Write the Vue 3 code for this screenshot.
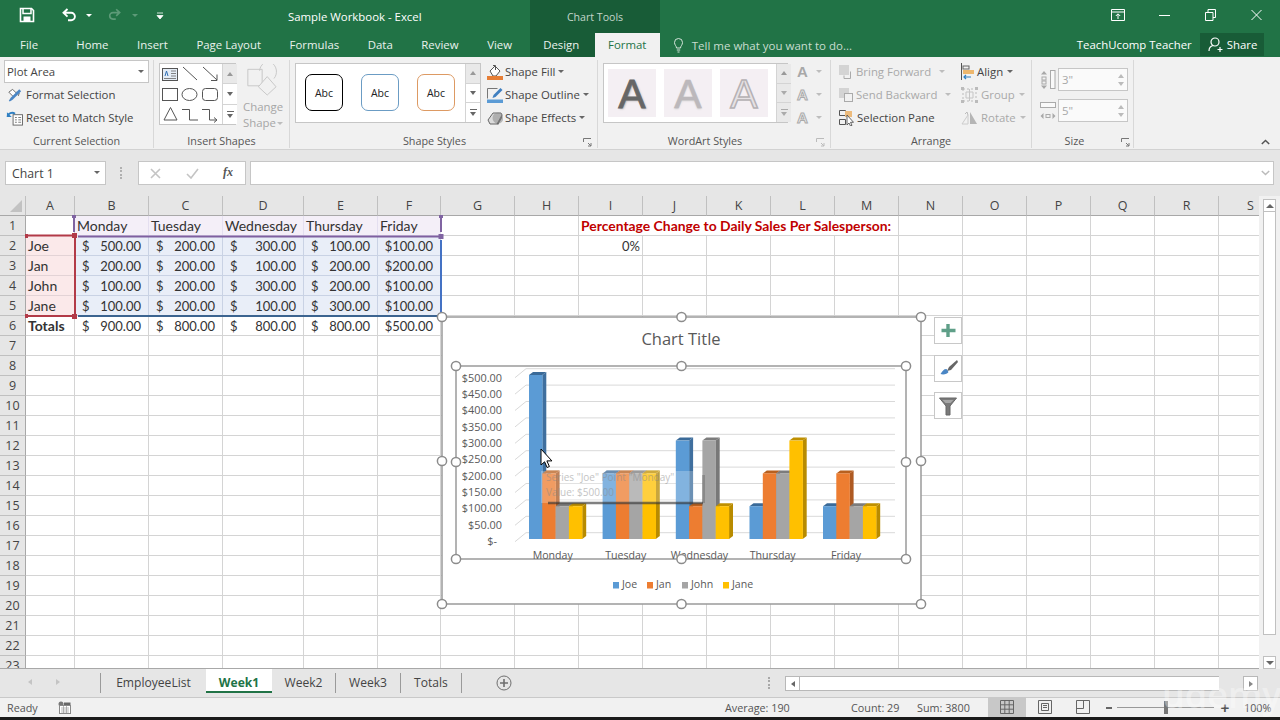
<script setup>
const tabs = ['Home', 'Insert', 'Page Layout', 'Formulas', 'Data', 'Review', 'View']
const colDefs = [['A',49],['B',74],['C',74],['D',81],['E',74],['F',63],['G',74],['H',64],['I',64],['J',64],['K',64],['L',64],['M',64],['N',64],['O',64],['P',64],['Q',64],['R',64],['S',64]]
const letters = colDefs.map(c => c[0])
const table = {
  2: ['Joe', 500, 200, 300, 100, 100],
  3: ['Jan', 200, 200, 100, 200, 200],
  4: ['John', 100, 200, 300, 200, 100],
  5: ['Jane', 100, 200, 100, 300, 100],
  6: ['Totals', 900, 800, 800, 800, 500]
}
const days = ['Monday', 'Tuesday', 'Wednesday', 'Thursday', 'Friday']
const money = v => v.toFixed(2)
function buildCells() {
  const out = []
  for (let r = 1; r <= 23; r++) {
    out.push({ key: 'h' + r, text: String(r), cls: 'rowhead' })
    for (let c = 0; c < letters.length; c++) {
      const key = letters[c] + r
      if (r === 1) {
        if (c >= 1 && c <= 5) { out.push({ key, text: days[c - 1], cls: 'tint-p' }); continue }
        if (letters[c] === 'I') { out.push({ key, text: 'Percentage Change to Daily Sales Per Salesperson:', cls: 'red', span: 5 }); continue }
        if (['J','K','L','M'].includes(letters[c])) continue
      }
      if (r === 2 && letters[c] === 'I') { out.push({ key, text: '0%', cls: 'right pct' }); continue }
      const row = table[r]
      if (row && c === 0) { out.push({ key, text: row[0], cls: r === 6 ? 'bold' : 'tint-r' }); continue }
      if (row && c >= 1 && c <= 4) { out.push({ key, dollar: true, text: money(row[c]), cls: r === 6 ? 'acct' : 'tint-b acct' }); continue }
      if (row && c === 5) { out.push({ key, text: '$' + money(row[c]), cls: 'right num' + (r === 6 ? '' : ' tint-b') }); continue }
      out.push({ key, text: '', cls: '' })
    }
  }
  return out
}
const cells = buildCells()

const series = [
  { name: 'Joe', front: '#5b9bd5', side: '#3f6f9e', top: '#3a6a98', vals: [500, 200, 300, 100, 100] },
  { name: 'Jan', front: '#ed7d31', side: '#ae5a22', top: '#b8601f', vals: [200, 200, 100, 200, 200] },
  { name: 'John', front: '#a5a5a5', side: '#787878', top: '#7c7c7c', vals: [100, 200, 300, 200, 100] },
  { name: 'Jane', front: '#ffc000', side: '#b88b00', top: '#bf9000', vals: [100, 200, 100, 300, 100] }
]
const groupX = [529, 602.6, 675.8, 749.5, 823]
const bars = []
groupX.forEach((gx, g) => {
  series.forEach((s, i) => {
    const x = gx + i * 13.3, w = 13.3, h = s.vals[g] * 0.328, y = 539 - h
    bars.push({
      key: g + '-' + i, x, y, w, h, c: s,
      sidePts: `${x + w},${y} ${x + w + 4},${y - 3} ${x + w + 4},536 ${x + w},539`,
      topPts: `${x},${y} ${x + 4},${y - 3} ${x + w + 4},${y - 3} ${x + w},${y}`
    })
  })
})
const gridY = Array.from({ length: 11 }, (_, i) => 368.7 + i * 16.4)
const axis = ['$500.00','$450.00','$400.00','$350.00','$300.00','$250.00','$200.00','$150.00','$100.00','$50.00','$-']
const catX = [552.7, 625.8, 699.5, 772.7, 846]
const legend = [['Joe', 613, '#5b9bd5'], ['Jan', 647, '#ed7d31'], ['John', 682, '#a5a5a5'], ['Jane', 723, '#ffc000']]
const handles = [
  [442,317],[681.5,317],[921,317],[442,461],[921,461],[442,604],[681.5,604],[921,604],
  [456,366],[681.5,366],[906,366],[456,462],[906,462],[456,559],[681.5,559],[906,559]
]
const sheets = [['EmployeeList', 106], ['Week1', 66, true], ['Week2', 64], ['Week3', 65], ['Totals', 61]]
</script>

<template>
  <div class="app">
    <!-- title bar -->
    <header class="titlebar">
      <div class="qat">
        <svg class="q-save" width="16" height="16" viewBox="0 0 16 16"><path d="M1.5 1.5h11l2 2v11h-13z" fill="none" stroke="#fff" stroke-width="1.6"/><path d="M4 2v4.5h8V2" fill="none" stroke="#fff" stroke-width="1.5"/><rect x="4.5" y="9.5" width="7" height="5" fill="#fff"/></svg>
        <svg class="q-undo" width="16" height="14" viewBox="0 0 16 14"><path d="M5.5 1 1.5 4.8l4 3.8M2 4.8h7.2a3.7 3.7 0 0 1 0 7.4H6" fill="none" stroke="#fff" stroke-width="1.9"/></svg>
        <i class="tri white q-d1"></i>
        <svg class="q-redo" width="14" height="13" viewBox="0 0 16 14"><path d="M10.5 1l4 3.8-4 3.8M14 4.8H6.8a3.7 3.7 0 0 0 0 7.4H10" fill="none" stroke="#5d9a78" stroke-width="1.9"/></svg>
        <i class="tri dim q-d2"></i>
        <svg class="q-cust" width="8" height="8" viewBox="0 0 8 8"><path d="M1 1h6M1 3.5h6l-3 3.5z" fill="#fff" stroke="#fff" stroke-width=".8"/></svg>
      </div>
      <div class="doc-title">Sample Workbook - Excel</div>
      <div class="chart-tools">Chart Tools</div>
      <div class="winbtns">
        <svg class="w-disp" width="14" height="12" viewBox="0 0 14 12"><path d="M.5.5h13v11H.5zM.5 3h13M7 10V5M4.8 7 7 4.8 9.2 7" fill="none" stroke="#fff"/></svg>
        <svg width="11" height="12" viewBox="0 0 11 12"><path d="M0 6.5h11" stroke="#fff"/></svg>
        <svg width="11" height="12" viewBox="0 0 11 12"><path d="M.5 3.5h7.5v8H.5zM3 3.5v-3h7.5v8H8" fill="none" stroke="#fff"/></svg>
        <svg width="11" height="12" viewBox="0 0 11 12"><path d="M.5 1l10 10M10.5 1l-10 10" stroke="#fff"/></svg>
      </div>
    </header>

    <!-- tabs -->
    <nav class="tabrow">
      <div class="tab file">File</div>
      <div v-for="t in tabs" :key="t" class="tab">{{ t }}</div>
      <div class="tab ctx">Design</div>
      <div class="tab active">Format</div>
      <div class="tell">
        <svg width="9" height="15" viewBox="0 0 9 15"><path d="M2.5 10c0-2-2-3-2-5.5a4 4 0 0 1 8 0C8.500 7 6.500 8 6.500 10zM2.800 12h3.400M3.500 14h2" fill="none" stroke="#d5e5db"/></svg>
        <span>Tell me what you want to do...</span>
      </div>
      <div class="user">TeachUcomp Teacher</div>
      <div class="share">
        <svg width="15" height="15" viewBox="0 0 15 15"><circle cx="7" cy="5" r="4" fill="none" stroke="#fff" stroke-width="1.2"/><path d="M1 14c0-3 2-5 4-5.500M9.500 12.500h5M12 10v5" fill="none" stroke="#fff" stroke-width="1.2"/></svg>
        <span>Share</span>
      </div>
    </nav>

    <!-- ribbon -->
    <section class="ribbon">
      <div class="group g1">
        <div class="gbody col">
          <div class="select">Plot Area<i class="tri gray"></i></div>
          <div class="ritem">
            <svg width="17" height="16" viewBox="0 0 18 16"><path d="M3 5l4-3 5 5-4 3z" fill="#fff" stroke="#666"/><path d="M11 5l3 1-1 3" fill="none" stroke="#666"/><path d="M16 4 7 13l-3 2-1-1 2-3 9-9z" fill="#4a86c5"/></svg>
            <span>Format Selection</span>
          </div>
          <div class="ritem">
            <svg width="17" height="16" viewBox="0 0 18 16"><rect x="7.5" y="4.5" width="10" height="11" fill="#fff" stroke="#666"/><path d="M9.5 7.5h2M9.5 10h2M9.5 12.5h2M13 7.5h3M13 10h3M13 12.5h3" stroke="#777"/><path d="M1.5 6.5a5 5 0 0 1 8-3" fill="none" stroke="#2f7fc2" stroke-width="2"/><path d="M1 2v5h5z" fill="#2f7fc2"/></svg>
            <span>Reset to Match Style</span>
          </div>
        </div>
        <div class="glabel">Current Selection</div>
      </div>

      <div class="group g2">
        <div class="gbody row">
          <div class="gallery shapes">
            <svg width="62" height="60" viewBox="160 64 62 60">
              <rect x="162.5" y="68.5" width="15" height="12" fill="#e4ecf5" stroke="#555"/>
              <path d="M171 71h5M171 73.5h5M171 76h5M164 78.5h12" stroke="#666" stroke-width=".8"/>
              <path d="M165 76l1.500-5 1.500 5" fill="none" stroke="#2f6fb5"/>
              <path d="M183 67l14 13M203 67l14 13M217 74.5v6h-6" fill="none" stroke="#555"/>
              <rect x="162.5" y="88.5" width="15" height="12" fill="none" stroke="#555"/>
              <ellipse cx="189.5" cy="94.5" rx="7.5" ry="6" fill="none" stroke="#555"/>
              <rect x="202.5" y="88.5" width="15" height="12" rx="3" fill="none" stroke="#555"/>
              <path d="M170.5 107.5l6.500 12.500h-13zM182 109.5h7.500V120h8.500M202 109.5h7.500V120h7M214 117.500l3 2.500-3 2.500" fill="none" stroke="#555"/>
            </svg>
            <div class="gscroll"><div class="sb dis"><i class="utri"></i></div><div class="sb"><i class="dtri"></i></div><div class="sb"><i class="more"></i></div></div>
          </div>
          <div class="change">
            <svg width="32" height="32" viewBox="0 0 38 33" preserveAspectRatio="none"><path d="M1 5.500h17v17H1z" fill="none" stroke="#c4c4c4"/><path d="M15 7a10 10 0 1 1 17 8" fill="none" stroke="#c4c4c4"/><path d="M24 13l-10.500 10.500L24 32l10.500-8.500z" fill="#f1f1f1" stroke="#c4c4c4"/></svg>
            <div>Change</div>
            <div>Shape<i class="tri pale"></i></div>
          </div>
        </div>
        <div class="glabel">Insert Shapes</div>
      </div>

      <div class="group g3">
        <div class="gbody row">
          <div class="gallery styles">
            <div class="abcs">
              <div class="abc k">Abc</div>
              <div class="abc b">Abc</div>
              <div class="abc o">Abc</div>
            </div>
            <div class="gscroll"><div class="sb dis"><i class="utri"></i></div><div class="sb"><i class="dtri"></i></div><div class="sb"><i class="more"></i></div></div>
          </div>
          <div class="col cmds">
            <div class="ritem">
              <svg width="16" height="16" viewBox="0 0 16 16"><path d="M3 7l5-5 5 5-4 5H6z" fill="#fff" stroke="#555"/><path d="M6 1.5h2.500V6" fill="none" stroke="#555"/><rect x="0" y="12" width="16" height="4" fill="#e67e36"/></svg>
              <span>Shape Fill</span><i class="tri gray"></i>
            </div>
            <div class="ritem">
              <svg width="16" height="16" viewBox="0 0 16 16"><path d="M.5 11.500v-10h10" fill="none" stroke="#777"/><path d="M13.500 1l2 2-7 7-3 1 1-3z" fill="#3f7fc0"/><rect x="0" y="12.500" width="16" height="3.500" fill="#5b9bd5"/></svg>
              <span>Shape Outline</span><i class="tri gray"></i>
            </div>
            <div class="ritem">
              <svg width="16" height="16" viewBox="0 0 16 16"><path d="M1 10l5-7h8l1 2-5 9H3z" fill="#dcdcdc" stroke="#666"/><path d="M10 14l5-9 0 3-4 7z" fill="#555"/><circle cx="11" cy="8" r="5.500" fill="#8b8b8b" opacity=".55"/></svg>
              <span>Shape Effects</span><i class="tri gray"></i>
            </div>
          </div>
        </div>
        <div class="glabel shift">Shape Styles<svg class="launch" width="9" height="9" viewBox="0 0 9 9"><path d="M.5 4V.5H8M5 5l3 3M8 5v3H5" fill="none" stroke="#777"/></svg></div>
      </div>

      <div class="group g4">
        <div class="gbody row">
          <div class="gallery word">
            <div class="wa"><span class="a1">A</span></div>
            <div class="wa"><span class="a2">A</span></div>
            <div class="wa"><span class="a3">A</span></div>
            <div class="gscroll"><div class="sb dis"><i class="utri"></i></div><div class="sb dis"><i class="dtri"></i></div><div class="sb dis"><i class="more"></i></div></div>
          </div>
          <div class="col acol">
            <div class="aitem"><b class="af">A</b><i class="tri pale"></i></div>
            <div class="aitem"><b class="ao">A</b><i class="tri pale"></i></div>
            <div class="aitem"><b class="ao">A</b><i class="tri pale"></i></div>
          </div>
        </div>
        <div class="glabel shift">WordArt Styles<svg class="launch" width="9" height="9" viewBox="0 0 9 9"><path d="M.5 4V.5H8M5 5l3 3M8 5v3H5" fill="none" stroke="#bbb"/></svg></div>
      </div>

      <div class="group g5">
        <div class="gbody row">
          <div class="col c-a">
            <div class="ritem off">
              <svg width="14" height="16" viewBox="0 0 14 16"><rect x="0" y="1" width="10" height="10" fill="#d4d4d4"/><path d="M11.5 7.5v7H5v-3" fill="none" stroke="#aaa"/></svg>
              <span>Bring Forward</span><i class="tri pale far"></i>
            </div>
            <div class="ritem off">
              <svg width="14" height="16" viewBox="0 0 14 16"><rect x="0" y="1" width="10" height="10" fill="#d4d4d4"/><rect x="5.5" y="6.5" width="8" height="8" fill="#f1f1f1" stroke="#aaa"/></svg>
              <span>Send Backward</span><i class="tri pale far"></i>
            </div>
            <div class="ritem">
              <svg width="15" height="17" viewBox="0 0 15 17"><path d="M.5 1.5h6v5h-6zM.5 10.5h6v5h-6z" fill="none" stroke="#555"/><rect x="6" y="2" width="7" height="6" fill="#edbb7c"/><path d="M8 6v10l2-2 1.500 3 1.500-.7-1.500-3h3z" fill="#fff" stroke="#555" stroke-width=".9"/></svg>
              <span>Selection Pane</span>
            </div>
          </div>
          <div class="col c-b">
            <div class="ritem">
              <svg width="13" height="17" viewBox="0 0 13 17"><path d="M.5 0v17" stroke="#555"/><rect x="2" y="3" width="6" height="3" fill="none" stroke="#666"/><rect x="2" y="7" width="11" height="4" fill="#edb76e"/><path d="M10 14H3M5 12l-2 2 2 2" fill="none" stroke="#2f7fc2" stroke-width="1.2"/></svg>
              <span>Align</span><i class="tri gray"></i>
            </div>
            <div class="ritem off">
              <svg width="17" height="16" viewBox="0 0 17 16"><path d="M2 2h13v12H2z" fill="none" stroke="#bbb" stroke-dasharray="2 2"/><path d="M5 5h7v6H5zM8.5 2v12" fill="none" stroke="#c5c5c5"/><rect x="0" y="0" width="3" height="3" fill="#bbb"/><rect x="14" y="0" width="3" height="3" fill="#bbb"/><rect x="0" y="13" width="3" height="3" fill="#bbb"/><rect x="14" y="13" width="3" height="3" fill="#bbb"/></svg>
              <span>Group</span><i class="tri pale"></i>
            </div>
            <div class="ritem off">
              <svg width="17" height="14" viewBox="0 0 17 14"><path d="M1 13l6-9v9z" fill="none" stroke="#ccc"/><path d="M9 1v12h7z" fill="#b5b5b5"/><path d="M4 3l2-2 1 3" fill="none" stroke="#bbb"/></svg>
              <span>Rotate</span><i class="tri pale"></i>
            </div>
          </div>
        </div>
        <div class="glabel">Arrange</div>
      </div>

      <div class="group g6">
        <div class="gbody col sizes">
          <div class="srow">
            <svg width="16" height="20" viewBox="0 0 16 20"><rect x="10.5" y=".5" width="4.5" height="18" fill="#f9f9f9" stroke="#aaa"/><path d="M4 1l-3 3.500h6zM4 19l-3-3.500h6z" fill="#a8a8a8"/><rect x="2" y="7" width="4" height="3" fill="none" stroke="#aaa"/><rect x="2" y="11" width="4" height="3" fill="none" stroke="#aaa"/></svg>
            <div class="spin"><span>3"</span><em><i class="utri"></i><i class="dtri"></i></em></div>
          </div>
          <div class="srow">
            <svg width="16" height="20" viewBox="0 0 16 20"><rect x=".5" y="1.5" width="15" height="5" fill="#f9f9f9" stroke="#aaa"/><path d="M.5 15l3-3v6zM15.500 15l-3-3v6z" fill="#a8a8a8"/><rect x="6" y="13.5" width="4" height="3" fill="none" stroke="#aaa"/></svg>
            <div class="spin"><span>5"</span><em><i class="utri"></i><i class="dtri"></i></em></div>
          </div>
        </div>
        <div class="glabel">Size<svg class="launch" width="9" height="9" viewBox="0 0 9 9"><path d="M.5 4V.5H8M5 5l3 3M8 5v3H5" fill="none" stroke="#777"/></svg></div>
      </div>
      <svg class="collapse" width="9" height="6" viewBox="0 0 9 6"><path d="M.8 5 4.500 1.500 8.200 5" fill="none" stroke="#555" stroke-width="1.5"/></svg>
    </section>

    <!-- formula bar -->
    <section class="fbar">
      <div class="namebox">Chart 1<i class="tri gray"></i></div>
      <div class="fdots"><i></i></div>
      <div class="fbtns">
        <svg class="fx-x" width="11" height="11" viewBox="0 0 11 11"><path d="M1 1l9 9M10 1l-9 9" stroke="#c4c4c4" stroke-width="1.6"/></svg>
        <svg class="fx-c" width="13" height="11" viewBox="0 0 13 11"><path d="M1 6l4 4 7-9" fill="none" stroke="#c4c4c4" stroke-width="1.6"/></svg>
        <span class="fx-f">fx</span>
      </div>
      <div class="finput"><svg width="9" height="6" viewBox="0 0 9 6"><path d="M.8 1 4.500 4.500 8.200 1" fill="none" stroke="#bbb" stroke-width="1.5"/></svg></div>
    </section>

    <!-- sheet -->
    <section class="sheet">
      <div class="gridwrap">
        <div class="grid">
          <div class="corner"><i></i></div>
          <div v-for="c in colDefs" :key="c[0]" class="colhead">{{ c[0] }}</div>
          <div
            v-for="c in cells"
            :key="c.key"
            class="cell"
            :class="c.cls"
            :style="c.span ? { gridColumn: 'span ' + c.span } : null"
          >
            <template v-if="c.dollar"><span>$</span><span>{{ c.text }}</span></template>
            <template v-else>{{ c.text }}</template>
          </div>
        </div>

        <svg class="overlay" width="1259" height="473" viewBox="0 196 1259 473">
          <!-- reference ranges -->
          <path d="M74 218v14" stroke="#8064a2" stroke-width="2"/>
          <path d="M441 218v14" stroke="#8064a2" stroke-width="2"/>
          <path d="M78 236.5h363" stroke="#7f60a0" stroke-width="2"/>
          <rect x="72" y="215" width="4" height="3" fill="#8064a2"/>
          <rect x="439" y="215" width="4" height="3" fill="#8064a2"/>
          <rect x="438.5" y="234" width="5" height="5" fill="#8064a2"/>
          <path d="M27 235.5h48M27 316h48M75 236v80" stroke="#b23a48" stroke-width="2" fill="none"/>
          <rect x="72" y="233" width="5" height="5" fill="#b23a48"/>
          <rect x="72" y="314" width="5" height="5" fill="#b23a48"/>
          <rect x="25" y="234" width="3" height="4" fill="#b23a48"/>
          <rect x="25" y="314" width="3" height="4" fill="#b23a48"/>
          <path d="M441 240v76" stroke="#4472c4" stroke-width="2"/>
          <path d="M78 316h363" stroke="#3c6490" stroke-width="2"/>

          <!-- chart -->
          <rect x="442" y="317" width="479" height="287" fill="#fff" stroke="#9a9a9a" stroke-width="1.5"/>
          <text x="681" y="344.5" class="c-title" text-anchor="middle">Chart Title</text>
          <rect x="456" y="366" width="450" height="193" fill="#fff" stroke="#9a9a9a" stroke-width="1.5"/>
          <g stroke="#d9d9d9" stroke-width="1">
            <line v-for="y in gridY" :key="y" x1="526" :y1="y" x2="895" :y2="y"/>
            <line v-for="y in gridY" :key="'d' + y" x1="515" :y1="y + 9" x2="526" :y2="y"/>
          </g>
          <text v-for="(t, i) in axis" :key="t" :x="t === '$-' ? 497 : 502" :y="381.5 + i * 16.35" class="c-axis" text-anchor="end">{{ t }}</text>
          <g v-for="b in bars" :key="b.key">
            <polygon :points="b.sidePts" :fill="b.c.side"/>
            <polygon :points="b.topPts" :fill="b.c.top"/>
            <rect :x="b.x" :y="b.y" :width="b.w + .2" :height="b.h" :fill="b.c.front"/>
          </g>
          <text v-for="(d, i) in days" :key="d" :x="catX[i]" y="559" class="c-cat" text-anchor="middle">{{ d }}</text>
          <g v-for="l in legend" :key="l[0]">
            <rect :x="l[1]" y="582" width="6" height="6.5" :fill="l[2]"/>
            <text :x="l[1] + 9" y="588" class="c-cat">{{ l[0] }}</text>
          </g>
          <!-- ghosted tooltip -->
          <rect x="541" y="471" width="161" height="32" fill="#fff" opacity=".24"/>
          <path d="M702 475h3v28h-3z" fill="#555" opacity=".35"/>
          <path d="M548 503h155" stroke="#333" stroke-width="2.4" opacity=".62"/>
          <text x="546" y="481" class="c-ghost">Series "Joe" Point "Monday"</text>
          <text x="546" y="495.5" class="c-ghost">Value: $500.00</text>
          <circle v-for="h in handles" :key="h.join()" :cx="h[0]" :cy="h[1]" r="4.6" fill="#fff" stroke="#8c8c8c" stroke-width="1.5"/>
          <path d="M541 449v16l3.600-3.200 2.500 5.700 2.300-1-2.500-5.600h5z" fill="#fff" stroke="#000" stroke-width="1"/>

          <!-- chart side buttons -->
          <g fill="#fff" stroke="#c8c8c8">
            <rect x="934.5" y="317.5" width="27" height="26"/>
            <rect x="934.5" y="355.5" width="27" height="26"/>
            <rect x="934.5" y="392.5" width="27" height="26"/>
          </g>
          <path d="M948 324v13M941.5 330.5h14" stroke="#5f9f88" stroke-width="3.4"/>
          <path d="M957 360l-8 7-2 4 4-1 7-8z" fill="#666"/>
          <path d="M946.5 369c-3 0-4 2-6 5 3 1 7 0 8-2z" fill="#4a86c5"/>
          <path d="M939.5 398h17l-6.500 8v9h-4v-9z" fill="#7a7a7a" stroke="#666"/>
          <path d="M942.5 400h11l-3 3h-5z" fill="#a8a8a8"/>
        </svg>
      </div>

      <aside class="vscroll">
        <div class="vbtn"><i class="utri dark"></i></div>
        <div class="vthumb"></div>
        <div class="vtrack"></div>
        <div class="vbtn"><i class="dtri dark"></i></div>
      </aside>
    </section>

    <!-- sheet tabs -->
    <section class="sheetbar">
      <div class="navs"><i class="ltri"></i><i class="rtri"></i></div>
      <div class="stabs">
        <div v-for="s in sheets" :key="s[0]" class="stab" :class="{ on: s[2] }" :style="{ width: s[1] + 'px' }">{{ s[0] }}</div>
      </div>
      <svg class="plus" width="16" height="16" viewBox="0 0 16 16"><circle cx="8" cy="8" r="7" fill="none" stroke="#6f6f6f"/><path d="M8 4v8M4 8h8" stroke="#6f6f6f" stroke-width="1.6"/></svg>
      <div class="vdots"></div>
      <div class="hscroll">
        <div class="hbtn"><i class="ltri dark"></i></div>
        <div class="hthumb"></div>
        <div class="htrack"></div>
        <div class="hbtn"><i class="rtri dark"></i></div>
      </div>
    </section>

    <!-- status -->
    <footer class="status">
      <span class="ready">Ready</span>
      <svg class="macro" width="13" height="13" viewBox="0 0 13 13"><circle cx="3" cy="3" r="2.5" fill="#777"/><rect x="1.5" y="4.5" width="11" height="8" fill="#fff" stroke="#888"/><path d="M3 7h8M3 9h8M3 11h8M5.5 5v7M8.5 5v7" stroke="#999" stroke-width=".7"/><path d="M6 1.500h6.500V4H6z" fill="#666"/></svg>
      <span class="s-avg">Average: 190</span>
      <span class="s-count">Count: 29</span>
      <span class="s-sum">Sum: 3800</span>
      <div class="views">
        <div class="view on"><svg width="14" height="14" viewBox="0 0 14 14"><path d="M.5.5h13v13H.5zM.5 4.800h13M.5 9.200h13M4.800.5v13M9.200.5v13" fill="none" stroke="#666"/></svg></div>
        <div class="view"><svg width="14" height="14" viewBox="0 0 14 14"><path d="M.5.5h13v13H.5zM3.500 3.500h7v7h-7zM5 5.500h4M5 7.500h4" fill="none" stroke="#666"/></svg></div>
        <div class="view"><svg width="14" height="14" viewBox="0 0 14 14"><path d="M.5.5h13v13H.5zM.5 8.500h7V.5" fill="none" stroke="#666"/></svg></div>
      </div>
      <div class="zoomer">
        <i class="minus"></i>
        <div class="zline"><b></b></div>
        <span class="zplus">+</span>
      </div>
      <span class="zpct">100%</span>
    </footer>
    <div class="blackbar"></div>
    <div class="watermark">udemy</div>
  </div>
</template>

<style>
html, body { margin: 0; background: #fff; }
</style>

<style scoped>
.app {
  position: relative; width: 1280px; height: 720px; overflow: hidden;
  display: flex; flex-direction: column;
  font: 11.4px "Open Sans", "Noto Sans", sans-serif; color: #444;
  background: #f1f1f1;
}
i { display: inline-block; font-style: normal; }
.tri { width: 0; height: 0; border: 3px solid transparent; border-top: 3.5px solid #666; border-bottom: 0; margin-left: 1px; vertical-align: middle; }
.tri.white { border-top-color: #fff; }
.tri.dim { border-top-color: #5d9a78; }
.tri.gray { border-top-color: #666; }
.tri.pale { border-top-color: #bdbdbd; }
.tri.far { margin-left: 5px; }
.utri { width: 0; height: 0; border: 3px solid transparent; border-bottom: 4px solid #999; border-top: 0; }
.dtri { width: 0; height: 0; border: 3px solid transparent; border-top: 4px solid #666; border-bottom: 0; }
.utri.dark, .dtri.dark { border-left-width: 4px; border-right-width: 4px; }
.utri.dark { border-bottom-color: #666; }
.ltri { width: 0; height: 0; border: 3.5px solid transparent; border-right: 4px solid #c4c4c4; border-left: 0; }
.rtri { width: 0; height: 0; border: 3.5px solid transparent; border-left: 4px solid #c4c4c4; border-right: 0; }
.ltri.dark { border-right-color: #666; }
.rtri.dark { border-left-color: #888; }
.more { width: 7px; height: 6px; border-top: 1px solid #666; position: relative; }
.more::after { content: ""; position: absolute; left: 0; top: 2px; width: 0; height: 0; border: 3.5px solid transparent; border-top: 4px solid #666; border-bottom: 0; }

/* title bar */
.titlebar { height: 33px; flex: none; display: flex; background: #217346; color: #fff; position: relative; }
.qat { width: 288px; flex: none; position: relative; }
.qat > * { position: absolute; }
.q-save { left: 19px; top: 7px; }
.q-undo { left: 62px; top: 8px; }
.q-d1 { left: 85px; top: 14px; }
.q-redo { left: 107px; top: 8px; }
.q-d2 { left: 131px; top: 14px; }
.q-cust { left: 156px; top: 12px; }
.doc-title { width: 242px; flex: none; line-height: 33px; font-size: 11.4px; }
.chart-tools { width: 130px; flex: none; background: #185c37; color: #c3d6ca; text-align: center; line-height: 34px; font-size: 10.6px; }
.winbtns { flex: 1; display: flex; align-items: center; justify-content: flex-end; gap: 35px; padding: 0 18px 3px 0; }
.w-disp { position: relative; left: 1px; }

/* tabs */
.tabrow { height: 24px; flex: none; display: flex; background: #217346; color: #fff; align-items: stretch; }
.tab { padding: 0 14.3px; line-height: 23px; font-size: 11.4px; white-space: nowrap; color: #eaf2ed; }
.tab.file { width: 62px; box-sizing: border-box; padding: 0 0 0 20px; }
.tab.ctx { background: #185c37; width: 65px; box-sizing: border-box; margin-left: 3.4px; padding: 0 2px 0 0; text-align: center; }
.tab.active { background: #f1f1f1; color: #217346; width: 65px; box-sizing: border-box; padding: 0; text-align: center; }
.tell { display: flex; align-items: center; gap: 9px; margin-left: 14px; color: #c8ddcf; width: 403px; flex: none; font-size: 11.5px; }
.user { width: 123px; flex: none; line-height: 23px; color: #fff; white-space: nowrap; }
.share { width: 64px; height: 23px; background: #185c37; display: flex; align-items: center; gap: 4px; padding-left: 8px; box-sizing: border-box; color: #fff; }

/* ribbon */
.ribbon { height: 93px; flex: none; display: flex; background: #f1f1f1; border-bottom: 1px solid #d2d2d2; box-sizing: border-box; position: relative; }
.group { height: 88px; margin-top: 3px; display: flex; flex-direction: column; border-right: 1px solid #d8d8d8; flex: none; box-sizing: border-box; position: relative; }
.gbody { height: 70px; flex: none; box-sizing: border-box; }
.glabel { text-align: center; line-height: 16px; margin-top: 3px; color: #555; font-size: 10.8px; }
.glabel.shift { padding-right: 18px; }
.col { display: flex; flex-direction: column; }
.row { display: flex; }
.launch { position: absolute; right: 5px; bottom: 1px; }
.g1 { width: 154px; padding-left: 4px; }
.g1 .glabel { padding-right: 4px; }
.g2 { width: 136px; }
.g3 { width: 308px; }
.g4 { width: 233px; }
.g5 { width: 201px; }
.g6 { width: 102px; }
.select { width: 145px; height: 23px; box-sizing: border-box; border: 1px solid #c6c6c6; background: #fff; line-height: 21px; padding-left: 2px; color: #444; position: relative; }
.select .tri { position: absolute; right: 4px; top: 9px; }
.ritem { height: 23px; display: flex; align-items: center; gap: 3px; white-space: nowrap; color: #444; flex: none; }
.g1 .ritem { padding-left: 2px; gap: 3px; }
.ritem.off { color: #a9a9a9; }
.gallery { background: #fff; border: 1px solid #c6c6c6; box-sizing: border-box; display: flex; margin-top: 3px; }
.gscroll { display: flex; flex-direction: column; width: 15px; flex: none; margin-left: auto; border-left: 1px solid #d4d4d4; box-sizing: border-box; height: 100%; }
.sb { flex: 1; display: flex; align-items: center; justify-content: center; background: #fff; border-bottom: 1px solid #d4d4d4; }
.sb:last-child { border-bottom: 0; }
.sb.dis { background: #e9e9e9; }
.shapes { width: 77px; height: 62px; margin-left: 5px; }
.shapes svg { flex: none; }
.change { width: 50px; margin-left: 2px; text-align: center; color: #a6a6a6; line-height: 16px; padding-top: 4px; }
.change svg { display: block; margin: 0 0 3px 9px; }
.styles { width: 186px; height: 60px; margin-left: 5px; }
.abcs { display: flex; gap: 18px; padding: 10px 0 0 9px; }
.abc { width: 38px; height: 37px; box-sizing: border-box; border-radius: 7px; border: 1px solid; display: flex; align-items: center; justify-content: center; font-size: 10.5px; color: #222; background: #fff; }
.abc.k { border-color: #000; }
.abc.b { border-color: #6b9cc4; }
.abc.o { border-color: #dd9a63; }
.cmds { margin-left: 6px; }
.cmds .ritem { gap: 2px; }
.word { width: 185px; height: 60px; margin-left: 5px; padding: 5px 0 5px 4px; gap: 8px; }
.word .gscroll { margin: -5px 0 -5px auto; height: 58px; }
.word .dtri { border-top-color: #aaa; }
.word .more { border-top-color: #aaa; }
.word .more::after { border-top-color: #aaa; }
.wa { width: 48px; height: 48px; box-sizing: border-box; padding-top: 3px; background: #f4eff3; display: flex; align-items: center; justify-content: center; font: 400 41px/45px "Liberation Sans", sans-serif; flex: none; }
.a1 { color: #666; -webkit-text-stroke: .8px #666; text-shadow: 1px 1px 2px #aaa; }
.a2 { color: #bcb8bb; -webkit-text-stroke: .6px #bcb8bb; text-shadow: 0 1px 2px #ccc; }
.a3 { color: #e6e2e5; -webkit-text-stroke: 1.5px #b5b1b4; }
.acol { margin-left: 9px; }
.aitem { height: 23px; display: flex; align-items: center; gap: 3px; }
.af, .ao { font: 700 15px "Liberation Sans", sans-serif; width: 12px; }
.af { color: #a8a8a8; }
.ao { color: #f1f1f1; -webkit-text-stroke: 1px #ababab; }
.aitem .tri { margin-left: 4px; }
.c-a { margin-left: 8px; width: 122px; }
.c-b { width: 70px; }
.sizes { padding: 8px 0 0 8px; gap: 8px; }
.srow { height: 23px; display: flex; align-items: center; gap: 2px; flex: none; }
.spin { width: 70px; height: 23px; box-sizing: border-box; border: 1px solid #c6c6c6; background: #fafafa; display: flex; align-items: center; justify-content: space-between; padding: 0 3px; color: #a8a8a8; }
.spin em { display: flex; flex-direction: column; gap: 4px; }
.spin .utri { border-bottom-color: #bbb; }
.spin .dtri { border-top-color: #bbb; }
.g6 .launch { right: 3px; }
.g6 .glabel { padding-right: 16px; }
.collapse { position: absolute; left: 1261px; top: 82px; }

/* formula bar */
.fbar { height: 46px; flex: none; background: #e6e6e6; box-sizing: border-box; padding-top: 11px; display: flex; }
.namebox { width: 101px; height: 24px; box-sizing: border-box; margin-left: 5px; border: 1px solid #c6c6c6; background: #fff; line-height: 23px; padding-left: 6px; font-size: 12.3px; color: #444; position: relative; }
.namebox .tri { position: absolute; right: 5px; top: 9px; }
.fdots { width: 32px; flex: none; position: relative; }
.fdots i { position: absolute; left: 14px; top: 6px; height: 12px; border-left: 2px dotted #b0b0b0; }
.fbtns { width: 108px; height: 24px; box-sizing: border-box; border: 1px solid #c6c6c6; background: #fff; position: relative; color: #c0c0c0; }
.fbtns svg { position: absolute; top: 6px; }
.fx-x { left: 11px; }
.fx-c { left: 47px; }
.fx-f { position: absolute; top: 3px; left: 84px; font: italic 700 12px "Liberation Serif", serif; color: #555; }
.finput { width: 1024px; height: 24px; margin-left: 4px; box-sizing: border-box; border: 1px solid #c6c6c6; background: #fff; text-align: right; padding-right: 3px; line-height: 20px; }

/* sheet */
.sheet { height: 473px; flex: none; display: flex; background: #fff; }
.gridwrap { width: 1259px; height: 473px; position: relative; overflow: hidden; flex: none; border-bottom: 1px solid #a8a8a8; box-sizing: border-box; }
.grid {
  display: grid;
  grid-template-columns: 26px 49px 74px 74px 81px 74px 63px 74px repeat(12, 64px);
  grid-auto-rows: 20px;
  font: 14px Lato, "Open Sans", sans-serif; color: #333;
}
.corner { background: #e6e6e6; border-bottom: 1px solid #a8a8a8; border-right: 1px solid #c0c0c0; box-sizing: border-box; position: relative; }
.corner i { position: absolute; right: 3px; bottom: 3px; width: 0; height: 0; border-left: 12px solid transparent; border-bottom: 12px solid #c2c2c2; }
.colhead { background: #e6e6e6; border-bottom: 1px solid #a8a8a8; border-right: 1px solid #c0c0c0; box-sizing: border-box; text-align: center; font: 12.5px/19px "Open Sans", sans-serif; color: #444; }
.cell { box-sizing: border-box; border-right: 1px solid #d4d4d4; border-bottom: 1px solid #d4d4d4; line-height: 20px; padding: 0 2px; white-space: nowrap; display: flex; justify-content: space-between; overflow: hidden; }
.rowhead { background: #e6e6e6; border-right: 1px solid #a8a8a8; border-bottom: 1px solid #c0c0c0; justify-content: center; font: 12.5px/20px "Open Sans", sans-serif; color: #444; padding: 0; }
.tint-p { background: #f4eff8; border-color: #e4dff0; }
.tint-r { background: #fbe9ea; border-color: #e3d3d6; }
.tint-b { background: #e9eef8; border-color: #c9d2e4; }
.acct { padding: 0 7px; font-size: 13px; }
.right { justify-content: flex-end; padding-right: 7px; }
.num { font-size: 13px; }
.pct { font-size: 13px; padding-right: 2px; }
.bold { font-weight: 700; }
.red { color: #c00000; font-weight: 700; font-size: 13.9px; }
.overlay { position: absolute; left: 0; top: 0; pointer-events: none; }
.c-title { font: 16.5px "Open Sans", sans-serif; fill: #595959; }
.c-axis { font: 10.9px "Open Sans", sans-serif; fill: #595959; }
.c-cat { font: 10.6px "Open Sans", sans-serif; fill: #595959; }
.c-ghost { font: 10px "Open Sans", sans-serif; fill: #888; opacity: .5; }

.vscroll { width: 21px; flex: none; background: #f1f1f1; box-sizing: border-box; padding: 3px 4px 0; display: flex; flex-direction: column; }
.vbtn { height: 13px; flex: none; background: #fff; border: 1px solid #c0c0c0; box-sizing: border-box; display: flex; align-items: center; justify-content: center; }
.vthumb { height: 423px; background: #fff; border: 1px solid #c0c0c0; border-top: 0; box-sizing: border-box; flex: none; }
.vtrack { flex: 1; }

/* sheet tabs */
.sheetbar { height: 28px; flex: none; background: #e6e6e6; display: flex; position: relative; }
.navs { width: 100px; flex: none; display: flex; gap: 24px; padding: 10px 0 0 28px; box-sizing: border-box; }
.stabs { display: flex; border-left: 1px solid #9a9a9a; height: 20px; margin-top: 4px; }
.stab { box-sizing: border-box; text-align: center; line-height: 19px; font-size: 12.1px; border-right: 1px solid #9a9a9a; color: #444; height: 20px; }
.stab.on { background: #fff; color: #217346; font-weight: 700; border-right: 0; height: 24px; margin-top: -4px; line-height: 27px; border-bottom: 2px solid #217346; margin-left: -1px; }
.plus { margin: 6px 0 0 34px; }
.vdots { position: absolute; left: 768px; top: 8px; width: 2px; height: 12px; border-left: 2px dotted #a8a8a8; }
.hscroll { position: absolute; left: 785px; top: 7px; width: 473px; height: 15px; display: flex; }
.hbtn { width: 15px; flex: none; height: 15px; box-sizing: border-box; background: #fff; border: 1px solid #b8b8b8; display: flex; align-items: center; justify-content: center; }
.hthumb { width: 419px; flex: none; background: #fff; border: 1px solid #b8b8b8; border-left: 0; border-right: 0; box-sizing: border-box; }
.htrack { flex: 1; }

/* status */
.status { height: 20px; flex: none; background: #f1f1f1; border-top: 1px solid #c9c9c9; box-sizing: border-box; display: flex; align-items: center; position: relative; font-size: 10.8px; color: #555; }
.ready { margin-left: 7px; width: 51px; }
.macro { flex: none; }
.s-avg { position: absolute; left: 725px; }
.s-count { position: absolute; left: 851px; }
.s-sum { position: absolute; left: 917px; }
.views { position: absolute; left: 988px; top: -1px; height: 20px; display: flex; }
.view { width: 38px; height: 20px; display: flex; align-items: center; justify-content: center; }
.view.on { background: #c8c8c8; }
.zoomer { position: absolute; left: 1106px; top: 0; width: 125px; height: 19px; display: flex; align-items: center; }
.minus { width: 6px; height: 2px; background: #666; }
.zline { flex: 1; height: 1px; background: #999; margin: 0 5px; position: relative; }
.zline b { position: absolute; left: 47px; top: -6px; width: 4px; height: 13px; background: #777; }
.zplus { font: 700 15px "Liberation Sans", sans-serif; color: #555; width: 12px; text-align: center; }
.zpct { position: absolute; left: 1244px; }
.blackbar { height: 3px; flex: none; background: #1b1b1b; }
.watermark { position: absolute; left: 1162px; top: 670px; font: 600 36px "Open Sans", sans-serif; color: rgba(255,255,255,.36); pointer-events: none; }
</style>
